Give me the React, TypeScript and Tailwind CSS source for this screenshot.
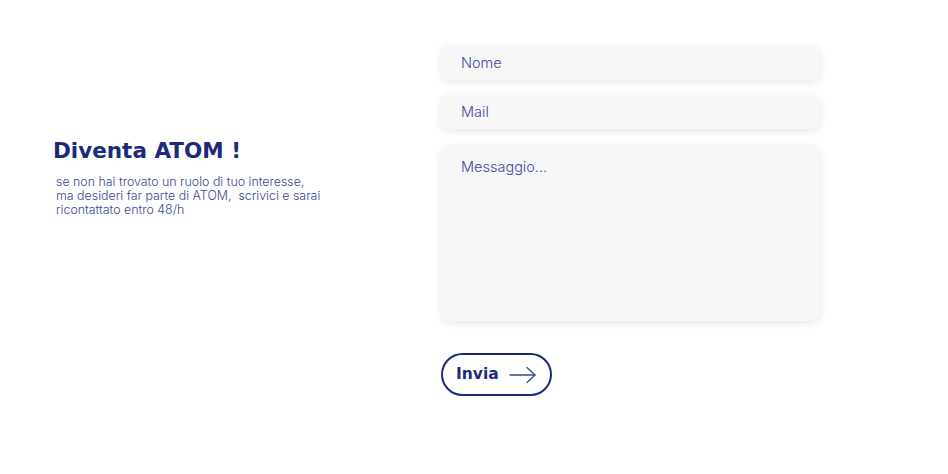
import React from "react";

export default function App() {
  return (
    <div className="w-[948px] h-[474px] bg-white flex pt-[46px]" style={{ fontFamily: "Inter, 'Noto Sans', sans-serif" }}>
      <div className="w-[441px] shrink-0 pl-[53px] pt-[91px]">
        <h1 className="text-[21.5px] leading-[28px] font-bold text-[#1c2a7c]" style={{ fontFamily: "'DejaVu Sans', sans-serif" }}>Diventa ATOM !</h1>
        <p className="mt-[10px] ml-[3px] text-[12.4px] leading-[14px] font-light text-[#3b4696] w-[330px]">
          se non hai trovato un ruolo di tuo interesse,
          <br />
          ma desideri far parte di ATOM,&nbsp; scrivici e sarai
          <br />
          ricontattato entro 48/h
        </p>
      </div>
      <div className="w-[379px] shrink-0 flex flex-col">
        <div className="h-[34px] rounded-[8px] bg-[#f7f7f8] shadow-[0_2px_8px_rgba(0,0,0,0.10)] flex items-center px-[20px] text-[14.5px] font-light text-[#3f4a9c]">
          Nome
        </div>
        <div className="mt-[15px] h-[34px] rounded-[8px] bg-[#f7f7f8] shadow-[0_2px_8px_rgba(0,0,0,0.10)] flex items-center px-[20px] text-[14.5px] font-light text-[#3f4a9c]">
          Mail
        </div>
        <div className="mt-[16px] h-[176px] rounded-[10px] bg-[#f7f7f8] shadow-[0_2px_8px_rgba(0,0,0,0.10)] px-[20px] pt-[11px] text-[14.5px] font-light text-[#3f4a9c]">
          Messaggio...
        </div>
        <div className="mt-[32px]">
          <button className="w-[111px] h-[43px] rounded-full border-2 border-[#1c2a7c] flex items-center pl-[13px] gap-[10px]">
            <span className="text-[15.5px] font-bold text-[#1c2a7c]" style={{ fontFamily: "'DejaVu Sans', sans-serif" }}>Invia</span>
            <svg width="28" height="18" viewBox="0 0 28 18" fill="none" stroke="#3b4696" strokeWidth="1.3" strokeLinecap="round" strokeLinejoin="round">
              <path d="M1 9h25" />
              <path d="M18 1.5l8 7.5-8 7.5" />
            </svg>
          </button>
        </div>
      </div>
    </div>
  );
}
